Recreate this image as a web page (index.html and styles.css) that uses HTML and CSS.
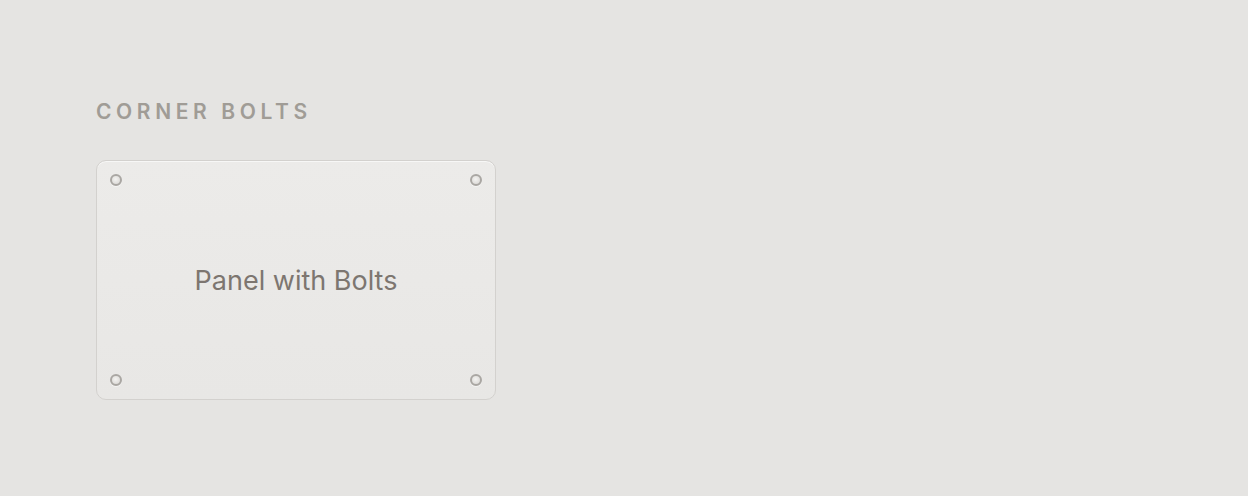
FILE: index.html
```html
<!DOCTYPE html>
<html lang="en">
<head>
    <meta charset="UTF-8">
    <title>Corner Bolts</title>
    <link rel="stylesheet" href="styles.css">
</head>
<body>
    <section class="demo">
        <h2 class="demo-title">Corner Bolts</h2>
        <div class="panel">
            <span class="bolt bolt-tl"></span>
            <span class="bolt bolt-tr"></span>
            <span class="bolt bolt-bl"></span>
            <span class="bolt bolt-br"></span>
            <p class="panel-label">Panel with Bolts</p>
        </div>
    </section>
</body>
</html>
```

FILE: styles.css
```css
body {
    margin: 0;
    background: #e5e4e2;
    font-family: Inter, 'Liberation Sans', Arial, sans-serif;
}

.demo {
    padding: 99px 96px 0;
}

.demo-title {
    margin: 0 0 35px;
    font-size: 21px;
    line-height: 26px;
    font-weight: 600;
    letter-spacing: 0.22em;
    text-transform: uppercase;
    color: #a09c96;
}

.panel {
    position: relative;
    box-sizing: border-box;
    width: 400px;
    height: 240px;
    display: flex;
    align-items: center;
    justify-content: center;
    background: linear-gradient(180deg, #ecebe9, #e8e7e5);
    border: 1.5px solid #d3d1ce;
    border-radius: 10px;
    box-shadow: inset 0 1px 0 rgba(255, 255, 255, 0.6);
}

.panel-label {
    margin: 0;
    font-size: 27px;
    font-weight: 400;
    color: #7d7670;
}

/* Screw heads in each corner */
.bolt {
    position: absolute;
    width: 12px;
    height: 12px;
    box-sizing: border-box;
    border-radius: 50%;
    border: 2px solid #aaa7a3;
    background: radial-gradient(circle at 45% 40%, #f4f3f1, #d6d4d1);
    box-shadow: 0 1px 0 rgba(255, 255, 255, 0.5);
}

.bolt-tl { top: 13px; left: 13px; }
.bolt-tr { top: 13px; right: 13px; }
.bolt-bl { bottom: 13px; left: 13px; }
.bolt-br { bottom: 13px; right: 13px; }
```
